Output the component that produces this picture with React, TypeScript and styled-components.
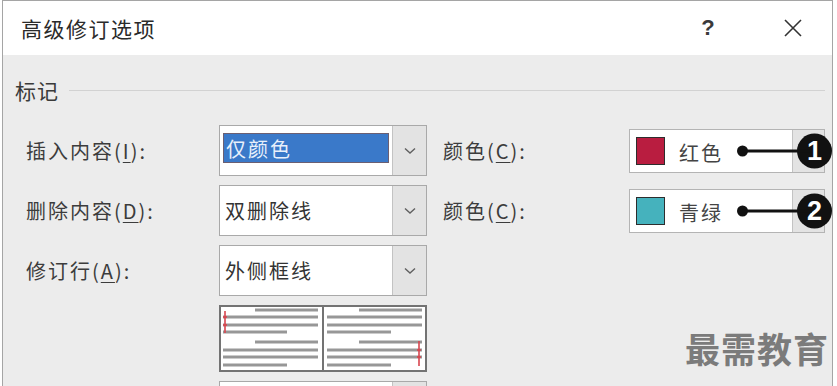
import styled, { createGlobalStyle } from 'styled-components';

const GlobalStyle = createGlobalStyle`
  html, body {
    margin: 0;
    padding: 0;
    background: #ffffff;
    overflow: hidden;
  }
  body {
    font-family: "Noto Sans CJK SC", "Noto Sans", sans-serif;
    color: #333;
  }
`;

const Page = styled.div`
  position: relative;
  width: 837px;
  height: 386px;
  overflow: hidden;
`;

const Dialog = styled.div`
  margin-left: 2px;
  width: 829px;
  height: 420px;
  border: 1px solid #a5a5a5;
  border-bottom: none;
  background: #ececec;
`;

const TitleBar = styled.div`
  height: 54px;
  background: #fff;
  display: flex;
  align-items: center;
  padding-left: 18px;
`;

const Title = styled.div`
  font-size: 21px;
  letter-spacing: 1.5px;
  color: #2a2a2a;
`;

const TitleButtons = styled.div`
  margin-left: auto;
  display: flex;
  gap: 45px;
  padding-right: 19px;
`;

const TitleButton = styled.div`
  width: 40px;
  height: 40px;
  display: flex;
  align-items: center;
  justify-content: center;
  font-family: "Liberation Sans", sans-serif;
  font-weight: 700;
  font-size: 22px;
  color: #3a3a3a;
`;

const Body = styled.div`
  padding: 21px 7px 0 12px;
`;

const GroupHeader = styled.div`
  display: flex;
  align-items: center;
  gap: 10px;
  height: 28px;
  font-size: 21px;
  color: #3a3a3a;
  letter-spacing: 1px;

  &::after {
    content: "";
    flex: 1;
    height: 1px;
    background: #d2d2d2;
  }
`;

const Grid = styled.div`
  margin: 21px 0 0 11px;
  display: grid;
  grid-template-columns: 193px 208px 202px 196px;
  grid-template-rows: 51px 51px 51px 67px 51px;
  row-gap: 9px;
  align-items: center;
`;

const Label = styled.div<{ $indent?: number }>`
  padding-left: ${({ $indent }) => $indent || 0}px;
  font-size: 20px;
  letter-spacing: 2px;
  color: #3c3c3c;
  white-space: nowrap;

  & u {
    text-decoration-thickness: 1px;
    text-underline-offset: 3px;
  }
`;

const Select = styled.div`
  height: 100%;
  box-sizing: border-box;
  border: 1px solid #a9a9a9;
  background: #fff;
  display: flex;
  align-items: stretch;
`;

const SelectValue = styled.div<{ $selected?: boolean }>`
  flex: 1;
  display: flex;
  align-items: center;
  font-size: 20px;
  letter-spacing: 2px;
  color: #333;
  padding-left: 5px;
  ${({ $selected }) =>
    $selected &&
    `
    margin: 7px 3px 12px 3px;
    padding-left: 2px;
    background: #3a79c9;
    color: #e8f0fb;
    border: 1px solid #6b5f72;
  `}
`;

const DropButton = styled.div`
  width: 33px;
  background: #e3e3e3;
  border-left: 1px solid #c3c3c3;
  display: flex;
  align-items: center;
  justify-content: center;
`;

const ColorBox = styled.div`
  position: relative;
  height: 44px;
  box-sizing: border-box;
  border: 1px solid #b4b4b4;
  background: #fff;
  display: flex;
  align-items: center;
`;

const Swatch = styled.div<{ $color: string }>`
  width: 27px;
  height: 26px;
  margin: 0 14px 0 6px;
  background: ${({ $color }) => $color};
  border: 1px solid #2d2d2d;
`;

const ColorName = styled.span`
  font-size: 20px;
  letter-spacing: 2px;
  color: #444;
  margin-top: 4px;
`;

const ColorDrop = styled.div`
  margin-left: auto;
  align-self: stretch;
  width: 31px;
  background: #e3e3e3;
  border-left: 1px solid #c3c3c3;
`;

const Callout = styled.div`
  position: absolute;
  left: 107px;
  top: 50%;
  width: 95px;
  height: 35px;
  transform: translateY(-50%);
  display: flex;
  align-items: center;

  &::before {
    content: "";
    width: 11px;
    height: 11px;
    border-radius: 50%;
    background: #111;
    flex: none;
  }

  &::after {
    content: "";
    position: absolute;
    left: 5px;
    right: 20px;
    top: 50%;
    height: 3px;
    margin-top: -1.5px;
    background: #111;
  }
`;

const CalloutNumber = styled.div`
  position: absolute;
  right: 0;
  top: 0;
  width: 35px;
  height: 35px;
  border-radius: 50%;
  background: #111;
  color: #fff;
  font-family: "Liberation Sans", sans-serif;
  font-weight: 700;
  font-size: 27px;
  display: flex;
  align-items: center;
  justify-content: center;
`;

const Preview = styled.div`
  grid-column: 2;
  height: 67px;
  box-sizing: border-box;
  border: 2px solid #737373;
  background: #fff;
  display: flex;
`;

const PreviewPane = styled.div`
  flex: 1;
  & + & {
    border-left: 2px solid #737373;
  }
`;

const Watermark = styled.div`
  position: absolute;
  left: 685px;
  top: 322px;
  font-size: 35px;
  font-weight: 700;
  color: #7b7b7b;
  letter-spacing: 1px;
`;

function Chevron() {
  return (
    <svg width="12" height="8" viewBox="0 0 12 8">
      <path d="M1 1.5 L6 6 L11 1.5" fill="none" stroke="#606060" strokeWidth="1.4" />
    </svg>
  );
}

function CloseIcon() {
  return (
    <svg width="20" height="20" viewBox="0 0 20 20">
      <path d="M2 2 L18 18 M18 2 L2 18" stroke="#333" strokeWidth="1.6" />
    </svg>
  );
}

function PreviewLines({ side }: { side: 'left' | 'right' }) {
  const o = side === 'left' ? 0 : 1;
  const lines = [
    [34, 97, 3],
    [2, 97, 10],
    [2, 97, 18],
    [2, 66, 25],
    [34, 97, 35],
    [2, 97, 43],
    [2, 97, 50],
    [2, 66, 58],
  ];
  const barX = side === 'left' ? 4 : 95;
  const barY = side === 'left' ? [4, 26] : [34, 59];
  const ticks = side === 'left' ? [10, 18] : [43, 50];
  return (
    <svg width="101" height="63" viewBox="0 0 101 63">
      {lines.map(([x1, x2, y], i) => (
        <line key={i} x1={x1 + o} x2={x2 + o} y1={y} y2={y} stroke="#979797" strokeWidth="3" />
      ))}
      <line x1={barX} x2={barX} y1={barY[0]} y2={barY[1]} stroke="#d9454e" strokeWidth="1.6" />
      {ticks.map((y) => (
        <line key={y} x1={barX - 2} x2={barX + 2} y1={y} y2={y} stroke="#d9454e" strokeWidth="1.6" />
      ))}
    </svg>
  );
}

interface ColorFieldProps {
  color: string;
  name: string;
  marker: string;
}

function ColorField({ color, name, marker }: ColorFieldProps) {
  return (
    <ColorBox>
      <Swatch $color={color} />
      <ColorName>{name}</ColorName>
      <ColorDrop />
      <Callout>
        <CalloutNumber>{marker}</CalloutNumber>
      </Callout>
    </ColorBox>
  );
}

function Dropdown({ value, selected }: { value?: string; selected?: boolean }) {
  return (
    <Select>
      <SelectValue $selected={selected}>{value}</SelectValue>
      <DropButton>
        <Chevron />
      </DropButton>
    </Select>
  );
}

export default function App() {
  return (
    <Page>
      <GlobalStyle />
      <Dialog>
        <TitleBar>
          <Title>高级修订选项</Title>
          <TitleButtons>
            <TitleButton>?</TitleButton>
            <TitleButton>
              <CloseIcon />
            </TitleButton>
          </TitleButtons>
        </TitleBar>
        <Body>
          <GroupHeader>标记</GroupHeader>
          <Grid>
            <Label>插入内容(<u>I</u>):</Label>
            <Dropdown value="仅颜色" selected />
            <Label $indent={16}>颜色(<u>C</u>):</Label>
            <ColorField color="#b91d40" name="红色" marker="1" />

            <Label>删除内容(<u>D</u>):</Label>
            <Dropdown value="双删除线" />
            <Label $indent={16}>颜色(<u>C</u>):</Label>
            <ColorField color="#45b2bd" name="青绿" marker="2" />

            <Label>修订行(<u>A</u>):</Label>
            <Dropdown value="外侧框线" />
            <div />
            <div />

            <Preview>
              <PreviewPane>
                <PreviewLines side="left" />
              </PreviewPane>
              <PreviewPane>
                <PreviewLines side="right" />
              </PreviewPane>
            </Preview>
            <div />
            <div />
            <div />
            <Dropdown />
          </Grid>
        </Body>
      </Dialog>
      <Watermark>最需教育</Watermark>
    </Page>
  );
}
